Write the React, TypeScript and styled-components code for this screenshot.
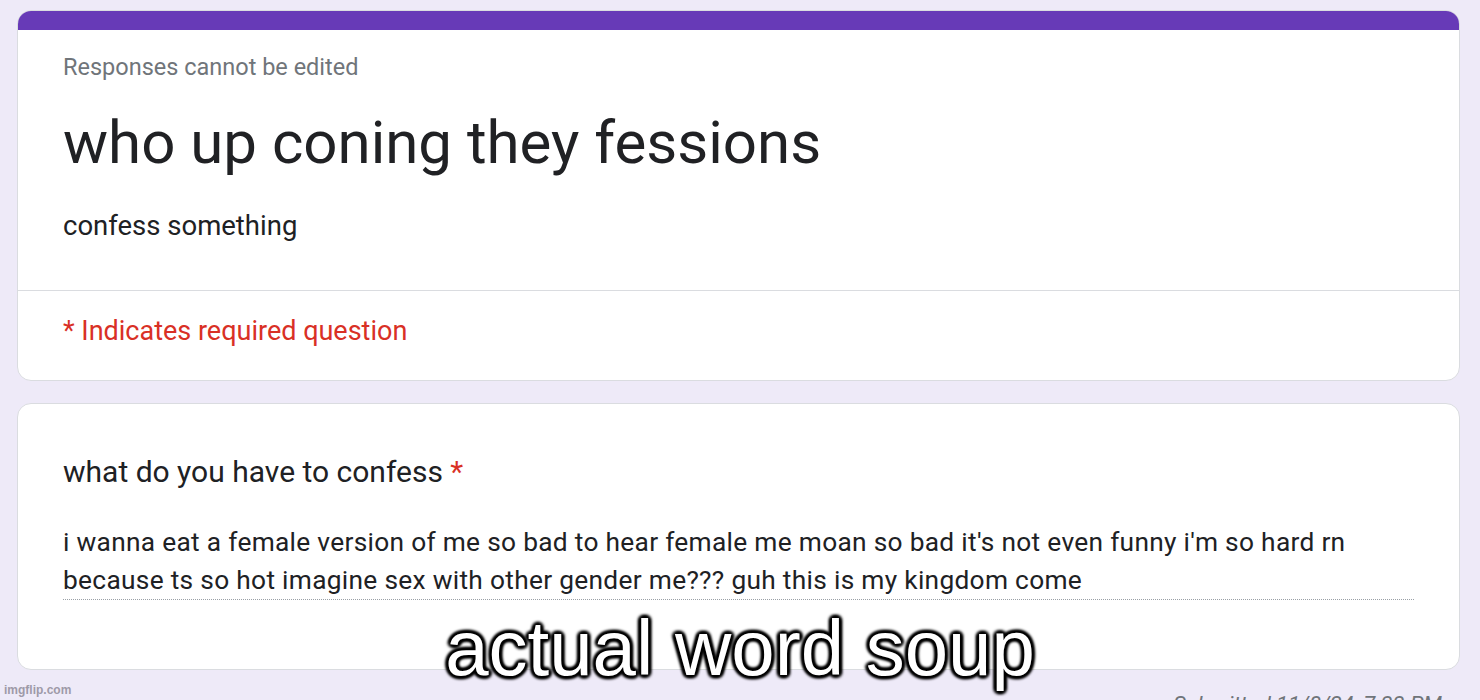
import React from 'react';
import styled, { createGlobalStyle } from 'styled-components';

const GlobalStyle = createGlobalStyle`
  html, body {
    margin: 0;
    padding: 0;
    background: #eeeaf8;
    font-family: Roboto, "Noto Sans", Arial, sans-serif;
    overflow: hidden;
  }
`;

const Page = styled.div`
  position: relative;
  width: 1480px;
  height: 700px;
  overflow: hidden;
  padding: 10px 20px 0 17px;
  box-sizing: border-box;
  display: flex;
  flex-direction: column;
  gap: 22px;
`;

const Card = styled.div`
  background: #fff;
  border: 1px solid #dadce0;
  border-radius: 14px;
  overflow: hidden;
`;

const TopBar = styled.div`
  height: 19px;
  background: #673ab7;
`;

const Header = styled.div`
  padding: 23px 45px 47px;
`;

const Note = styled.div`
  font-size: 23.5px;
  line-height: 28px;
  color: #70757a;
`;

const Title = styled.h1`
  margin: 24px 0 0;
  font-size: 60px;
  font-weight: 400;
  line-height: 76px;
  color: #202124;
`;

const Description = styled.div`
  margin-top: 28px;
  font-size: 27.5px;
  line-height: 34px;
  color: #202124;
`;

const Divider = styled.div`
  height: 1px;
  background: #dadce0;
`;

const Required = styled.div`
  padding: 23px 45px 32px;
  font-size: 27px;
  line-height: 34px;
  color: #d93025;
`;

const QuestionBody = styled.div`
  padding: 50px 45px 69px;
`;

const Question = styled.div`
  font-size: 30px;
  line-height: 36px;
  color: #202124;
`;

const Star = styled.span`
  color: #d93025;
`;

const Answer = styled.div`
  margin-top: 33px;
  font-size: 26.3px;
  line-height: 38px;
  letter-spacing: 0.3px;
  color: #202124;
  border-bottom: 1px dotted #9aa0a6;
`;

const Submitted = styled.div`
  position: absolute;
  right: 38px;
  top: 692px;
  font-size: 22px;
  color: #70757a;
  font-style: italic;
`;

const Watermark = styled.div`
  position: absolute;
  left: 4px;
  top: 683px;
  font-family: "Liberation Sans", Arial, sans-serif;
  font-size: 12px;
  font-weight: 700;
  color: #9e9aa8;
`;

const Caption = styled.div`
  position: absolute;
  left: 0;
  right: 0;
  top: 603px;
  text-align: center;
  font-family: "Liberation Sans", Arial, sans-serif;
  font-size: 78px;
  line-height: 90px;
  color: #fff;
  text-shadow:
    2px 2px 3px #000, -2px -2px 3px #000, 2px -2px 3px #000, -2px 2px 3px #000,
    0 3px 3px #000, 0 -3px 3px #000, 3px 0 3px #000, -3px 0 3px #000;
`;

export default function App() {
  return (
    <>
      <GlobalStyle />
      <Page>
        <Card>
          <TopBar />
          <Header>
            <Note>Responses cannot be edited</Note>
            <Title>who up coning they fessions</Title>
            <Description>confess something</Description>
          </Header>
          <Divider />
          <Required>* Indicates required question</Required>
        </Card>
        <Card>
          <QuestionBody>
            <Question>
              what do you have to confess <Star>*</Star>
            </Question>
            <Answer>
              i wanna eat a female version of me so bad to hear female me moan so bad it's not even funny i'm so hard rn
              <br />
              because ts so hot imagine sex with other gender me??? guh this is my kingdom come
            </Answer>
          </QuestionBody>
        </Card>
        <Caption>actual word soup</Caption>
        <Submitted>Submitted 11/8/24, 7:33 PM</Submitted>
        <Watermark>imgflip.com</Watermark>
      </Page>
    </>
  );
}
